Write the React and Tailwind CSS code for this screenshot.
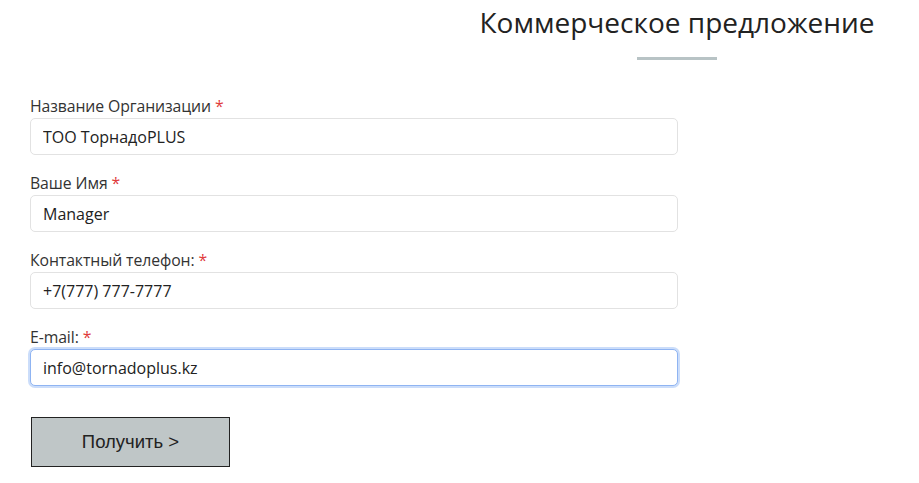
import { useState } from "react";

const fields = [
  { name: "org", label: "Название Организации", value: "ТОО ТорнадоPLUS" },
  { name: "name", label: "Ваше Имя", value: "Manager" },
  { name: "phone", label: "Контактный телефон:", value: "+7(777) 777-7777" },
  { name: "email", label: "E-mail:", value: "info@tornadoplus.kz", focused: true },
];

function App() {
  const [form, setForm] = useState(
    Object.fromEntries(fields.map((f) => [f.name, f.value]))
  );

  return (
    <div className="w-[919px] h-[483px] bg-white text-[#333] font-['Open_Sans',sans-serif] overflow-hidden">
      <div className="pl-[435px] pt-[3px] flex flex-col items-center">
        <h1 className="text-[28px] leading-[38px] font-normal text-[#222]">Коммерческое предложение</h1>
        <div className="mt-[16px] w-[80px] h-[3px] bg-[#b8c3c5]" />
      </div>

      <form className="pl-[30px] pt-[36px] w-[678px] flex flex-col gap-[18px]">
        {fields.map((f) => (
          <div key={f.name}>
            <label className="block text-[15.8px] tracking-[-0.1px] leading-[20px] mb-[2px] text-[#333]">
              {f.label} <span className="text-[#e03b3b]">*</span>
            </label>
            <input
              type="text"
              value={form[f.name]}
              onChange={(e) => setForm((p) => ({ ...p, [f.name]: e.target.value }))}
              className={
                "w-full h-[37px] px-[12px] rounded-[5px] bg-white text-[16px] text-[#222] outline-none border " +
                (f.focused
                  ? "border-[#8fb4f2] shadow-[0_0_0_2px_rgba(140,180,245,0.45)]"
                  : "border-[#e2e2e2]")
              }
            />
          </div>
        ))}
        <div className="pt-[13px] pl-[1px]">
          <button
            type="button"
            className="w-[199px] h-[50px] bg-[#bfc6c7] border border-[#222] text-[18.5px] text-[#222] font-['Liberation_Sans',sans-serif]"
          >
            Получить &gt;
          </button>
        </div>
      </form>
    </div>
  );
}

export default App;
